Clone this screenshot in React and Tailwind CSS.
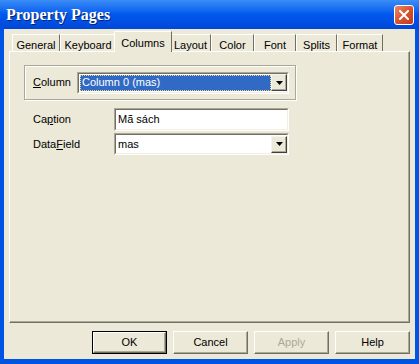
import React from "react";

const tabs = [
  { label: "General", w: 48 },
  { label: "Keyboard", w: 56 },
  { label: "Columns", w: 54, active: true },
  { label: "Layout", w: 41 },
  { label: "Color", w: 43 },
  { label: "Font", w: 42 },
  { label: "Splits", w: 41 },
  { label: "Format", w: 46 },
];

function DropArrow() {
  return (
    <div className="flex h-[17px] w-[16px] items-center justify-center border-t border-l border-t-[#f5f4ee] border-l-[#f5f4ee] border-r border-b border-r-[#404040] border-b-[#404040] bg-[#ece9d8] shadow-[inset_-1px_-1px_0_#aca899]">
      <svg width="7" height="4" viewBox="0 0 7 4">
        <path d="M0 0h7L3.5 4z" fill="#000" />
      </svg>
    </div>
  );
}

function Sunken({ className = "", children }) {
  return (
    <div
      className={
        "flex border-t border-l border-t-[#aca899] border-l-[#aca899] border-r border-b border-r-white border-b-white " +
        className
      }
    >
      <div className="flex flex-1 items-center border-t border-l border-t-[#716f64] border-l-[#716f64] border-r border-b border-r-[#f1efe2] border-b-[#f1efe2] bg-white">
        {children}
      </div>
    </div>
  );
}

function Button({ children, isDefault, disabled }) {
  return (
    <div
      className={
        "flex h-[23px] w-[75px] items-center justify-center " +
        (isDefault ? "border border-black" : "")
      }
    >
      <div className="flex h-full w-full items-center justify-center border-t border-l border-t-white border-l-white border-r border-b border-r-[#716f64] border-b-[#716f64] shadow-[inset_-1px_-1px_0_#aca899] bg-[#ece9d8]">
        <span className={disabled ? "text-[#aca899]" : "text-black"}>{children}</span>
      </div>
    </div>
  );
}

export default function App() {
  return (
    <div
      className="flex h-[364px] w-[419px] flex-col bg-[#0054e3] text-[11px] text-black"
      style={{ fontFamily: '"Liberation Sans", Arial, sans-serif' }}
    >
      {/* title bar */}
      <div className="flex h-[29px] items-center justify-between bg-gradient-to-b from-[#3a8cf6] via-[#0058ee] to-[#0047d8] pl-[6px] pr-[5px]">
        <span
          className="text-[16px] font-bold text-white [text-shadow:1px_1px_0_#0a246a]"
          style={{ fontFamily: '"Liberation Serif", "Times New Roman", serif' }}
        >
          Property Pages
        </span>
        <div className="flex h-[20px] w-[20px] items-center justify-center rounded-[3px] border border-white bg-gradient-to-br from-[#e88a6c] via-[#d8522e] to-[#c1391b]">
          <svg width="10" height="10" viewBox="0 0 10 10">
            <path d="M1 1L9 9M9 1L1 9" stroke="#fff" strokeWidth="2" strokeLinecap="square" />
          </svg>
        </div>
      </div>

      {/* client area */}
      <div className="mx-[4px] mb-[5px] flex flex-1 flex-col bg-[#ece9d8]">
        {/* tabs */}
        <div className="ml-[8px] mt-[2px] flex h-[20px] items-end">
          {tabs.map((t) =>
            t.active ? (
              <div
                key={t.label}
                style={{ width: t.w + 4 }}
                className="relative z-10 -mx-[2px] -mb-px flex h-[21px] items-start justify-center border-t border-l border-t-white border-l-white border-r border-r-[#716f64] bg-[#ece9d8] pt-[3px]"
              >
                {t.label}
              </div>
            ) : (
              <div
                key={t.label}
                style={{ width: t.w }}
                className="flex h-[17px] items-start justify-center border-t border-l border-t-white border-l-white border-r border-r-[#716f64] pt-[2px]"
              >
                {t.label}
              </div>
            )
          )}
        </div>

        {/* panel */}
        <div className="ml-[5px] flex h-[272px] w-[401px] flex-col border-t border-l border-t-white border-l-white border-r border-b border-r-[#716f64] border-b-[#716f64] shadow-[inset_-1px_-1px_0_#aca899]">
          {/* group box */}
          <div className="ml-[14px] mt-[13px] flex h-[35px] w-[272px] items-center border border-[#aca899] shadow-[inset_1px_1px_0_#fff,1px_1px_0_#fff] pl-[8px]">
            <span className="w-[44px]">
              <span className="underline">C</span>olumn
            </span>
            <Sunken className="h-[22px] w-[212px]">
              <div className="ml-[1px] flex h-[16px] flex-1 items-center border border-dotted border-[#f0d870] bg-[#316ac5] pl-[1px] text-white">
                Column 0 (mas)
              </div>
              <DropArrow />
            </Sunken>
          </div>

          {/* caption */}
          <div className="ml-[23px] mt-[8px] flex items-center">
            <span className="w-[81px]">
              Ca<span className="underline">p</span>tion
            </span>
            <Sunken className="h-[23px] w-[175px]">
              <span className="pl-[2px]">Mã sách</span>
            </Sunken>
          </div>

          {/* datafield */}
          <div className="ml-[23px] mt-[2px] flex items-center">
            <span className="w-[81px]">
              Data<span className="underline">F</span>ield
            </span>
            <Sunken className="h-[22px] w-[175px]">
              <span className="flex-1 pl-[2px]">mas</span>
              <DropArrow />
            </Sunken>
          </div>
        </div>

        {/* buttons */}
        <div className="ml-[88px] mt-[8px] flex gap-[6px]">
          <Button isDefault>OK</Button>
          <Button>Cancel</Button>
          <Button disabled>Apply</Button>
          <Button>Help</Button>
        </div>
      </div>
    </div>
  );
}
